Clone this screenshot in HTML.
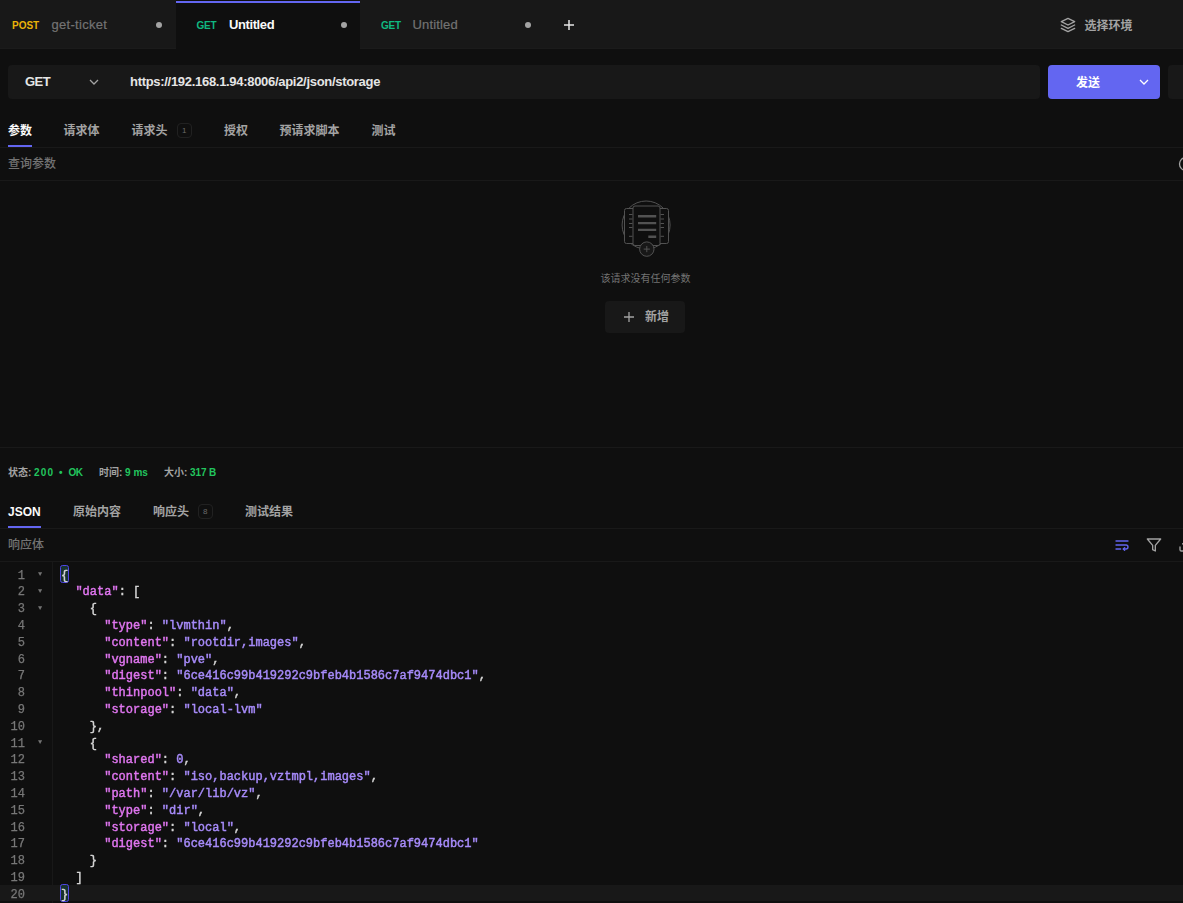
<!DOCTYPE html>
<html lang="zh-CN">
<head>
<meta charset="utf-8">
<title>Hoppscotch</title>
<style>
*{box-sizing:border-box;margin:0;padding:0}
html,body{width:1183px;height:903px;overflow:hidden;background:#0f0f0f}
body{font-family:"Liberation Sans","Noto Sans CJK SC",sans-serif;color:#a3a3a3;font-size:12px;position:relative}
.abs{position:absolute}
.tabbar{position:absolute;left:0;top:0;width:1183px;height:49px;background:#181818;border-bottom:1px solid #1b1b1b}
.tab{position:absolute;top:0;height:49px}
.tab .m{position:absolute;top:20px;font-size:10px;font-weight:bold;line-height:12px;letter-spacing:0}
.tab .t{position:absolute;top:17px;font-size:13px;line-height:16px;white-space:nowrap}
.dot{position:absolute;width:6px;height:6px;border-radius:50%;background:#a3a3a3;top:22px}
.active{background:#0f0f0f}
.active:before{content:"";position:absolute;left:0;right:0;top:1px;height:2px;background:#6366f1}
.hline{position:absolute;left:0;width:1183px;height:1px;background:#191919}
.ttab{position:absolute;font-size:12px;font-weight:bold;line-height:16px;white-space:nowrap;color:#a3a3a3}
.st{position:absolute;top:466px;font-size:10px;font-weight:bold;line-height:14px;white-space:nowrap;color:#a3a3a3}
.g{color:#22c55e}
.ul{position:absolute;height:2px;background:#6366f1}
.badge{position:absolute;border:1px solid #212121;border-radius:4px;font-size:8px;line-height:13px;text-align:center;color:#6a6a6a;width:15px;height:15px}
.code{position:absolute;left:0;top:567px;padding-top:0.600px;will-change:transform;width:1183px;font-family:"Liberation Mono",monospace;font-size:12px;font-weight:normal;-webkit-text-stroke:0.450px;color:#d4d4d4}
.ln{position:relative;z-index:0;height:16.8px;line-height:16.8px;white-space:pre}
.ln .n{position:absolute;left:0;width:25px;text-align:right;color:#777777;font-weight:normal;-webkit-text-stroke:0.250px}
.ln .f{position:absolute;left:38px;top:-1.300px;color:#737373;font-size:7px;font-weight:normal;-webkit-text-stroke:0}
.ln .c{position:absolute;left:61px}
.bm{position:relative}
.bm:before{content:"";position:absolute;left:-1px;right:-1px;top:-3.500px;bottom:-0.400px;border:1px solid #4f46e5;border-radius:2.500px;background:#17322e;z-index:-1}
.k{color:#e076f0}
.s{color:#a78bfa}
.gut{position:absolute;left:52px;top:562px;width:1px;height:341px;background:#181818}
</style>
</head>
<body>
<div class="tabbar">
  <div class="tab" style="left:0;width:176px">
    <span class="m" style="left:12px;color:#eab308">POST</span>
    <span class="t" style="left:51.500px;color:#737373;letter-spacing:0.300px;-webkit-text-stroke:0.200px">get-ticket</span>
    <span class="dot" style="left:156px"></span>
  </div>
  <div class="tab active" style="left:176px;width:184px">
    <span class="m" style="left:20.500px;color:#10b981;letter-spacing:-0.200px">GET</span>
    <span class="t" style="left:53px;color:#fafafa;font-weight:bold;letter-spacing:-0.400px">Untitled</span>
    <span class="dot" style="left:165px"></span>
  </div>
  <div class="tab" style="left:360px;width:184px">
    <span class="m" style="left:21px;color:#10b981;letter-spacing:-0.200px">GET</span>
    <span class="t" style="left:52.500px;color:#737373;letter-spacing:0.150px;-webkit-text-stroke:0.200px">Untitled</span>
    <span class="dot" style="left:165px"></span>
  </div>
  <svg class="abs" style="left:562px;top:18px" width="14" height="14" viewBox="0 0 14 14"><path d="M7 2v10M2 7h10" stroke="#e5e5e5" stroke-width="1.500" fill="none"/></svg>
  <svg class="abs" style="left:1060px;top:16.800px" width="16" height="16" viewBox="0 0 24 24" fill="none" stroke="#a3a3a3" stroke-width="2" stroke-linecap="round" stroke-linejoin="round"><path d="M12 2 2 7l10 5 10-5-10-5z"/><path d="m2 12 10 5 10-5"/><path d="m2 17 10 5 10-5"/></svg>
  <span class="abs" style="left:1084.500px;top:17.500px;font-size:12px;font-weight:bold;line-height:16px;color:#a3a3a3;white-space:nowrap">选择环境</span>
</div>

<!-- URL row -->
<div class="abs" style="left:8px;top:65px;width:1032px;height:34px;background:#181818;border-radius:4px"></div>
<span class="abs" style="left:25px;top:74px;font-size:13px;font-weight:bold;line-height:16px;color:#e5e5e5;letter-spacing:-0.500px">GET</span>
<svg class="abs" style="left:88px;top:76px" width="12" height="12" viewBox="0 0 12 12"><path d="M2 4l4 4 4-4" stroke="#a3a3a3" stroke-width="1.3" fill="none"/></svg>
<span class="abs" style="left:130px;top:74px;font-size:13px;font-weight:bold;line-height:16px;color:#e5e5e5;white-space:nowrap;letter-spacing:-0.300px">https://192.168.1.94:8006/api2/json/storage</span>
<div class="abs" style="left:1048px;top:65px;width:112px;height:34px;background:#6366f1;border-radius:4px"></div>
<span class="abs" style="left:1076px;top:74.500px;font-size:12px;font-weight:bold;line-height:16px;color:#fff;white-space:nowrap">发送</span>
<svg class="abs" style="left:1138px;top:76px" width="12" height="12" viewBox="0 0 12 12"><path d="M2 4l4 4 4-4" stroke="#fff" stroke-width="1.3" fill="none"/></svg>
<div class="abs" style="left:1168px;top:65px;width:20px;height:34px;background:#181818;border-radius:4px"></div>

<!-- request tabs -->
<span class="ttab" style="left:8px;top:123px;color:#fafafa">参数</span>
<span class="ttab" style="left:63.500px;top:123px">请求体</span>
<span class="ttab" style="left:131.500px;top:123px">请求头</span>
<span class="badge" style="left:176.700px;top:123px">1</span>
<span class="ttab" style="left:224px;top:123px">授权</span>
<span class="ttab" style="left:279.500px;top:123px">预请求脚本</span>
<span class="ttab" style="left:371.500px;top:123px">测试</span>
<div class="ul" style="left:8px;top:145px;width:24px"></div>
<div class="hline" style="top:147px"></div>
<span class="abs" style="left:8px;top:156px;font-size:12px;font-weight:500;line-height:16px;color:#737373;white-space:nowrap">查询参数</span>
<svg class="abs" style="left:1177.700px;top:156px" width="16" height="16" viewBox="0 0 16 16"><circle cx="8" cy="8" r="6.5" stroke="#a3a3a3" stroke-width="1.3" fill="none"/></svg>
<div class="hline" style="top:180px"></div>

<!-- empty state -->
<svg class="abs" style="left:618px;top:198px" width="58" height="60" viewBox="0 0 58 60" fill="none" stroke="#525252" stroke-width="1">
  <circle cx="28.100" cy="27" r="24"/>
  <rect x="6.500" y="10.500" width="44" height="35" rx="2" fill="#0f0f0f"/>
  <rect x="15" y="8" width="27" height="39.500" rx="2" fill="#0f0f0f"/>
  <path d="M11 16.500h3.500M11 21h3.500M11 25.500h3.500M11 29.500h3.500M11 38.300h3.500M42.500 16.500h3.500M42.500 21h3.500M42.500 25.500h3.500M42.500 29.500h3.500M42.500 38.300h3.500"/>
  <path d="M20 18.300h18.200M20 25.100h18.200M20 31.900h18.200M30.300 38.700h7.900" stroke-width="2.400"/>
  <circle cx="28.800" cy="51.100" r="7.200" fill="#181818"/>
  <path d="M28.800 48v6.200M25.700 51.100h6.200"/>
</svg>
<span class="abs" style="left:545.500px;top:271.500px;width:200px;text-align:center;font-size:10px;line-height:14px;color:#737373;white-space:nowrap">该请求没有任何参数</span>
<div class="abs" style="left:605px;top:301px;width:80px;height:32px;background:#181818;border-radius:4px"></div>
<svg class="abs" style="left:622px;top:310px" width="14" height="14" viewBox="0 0 14 14"><path d="M7 2v10M2 7h10" stroke="#a3a3a3" stroke-width="1.300" fill="none"/></svg>
<span class="abs" style="left:645px;top:309px;font-size:12px;font-weight:bold;line-height:16px;color:#a3a3a3;white-space:nowrap">新增</span>

<div class="hline" style="top:447px"></div>

<!-- status -->
<div class="st" style="left:8px">状态:</div>
<div class="st g" style="left:34px;letter-spacing:1.200px">200</div>
<div class="st g" style="left:59px">•</div>
<div class="st g" style="left:68.400px;letter-spacing:-0.300px">OK</div>
<div class="st" style="left:99px">时间: <span class="g">9 ms</span></div>
<div class="st" style="left:164px">大小: <span class="g" style="letter-spacing:-0.150px">317 B</span></div>

<!-- response tabs -->
<span class="ttab" style="left:8px;top:504px;color:#fafafa">JSON</span>
<span class="ttab" style="left:73px;top:504px">原始内容</span>
<span class="ttab" style="left:153px;top:504px">响应头</span>
<span class="badge" style="left:197.700px;top:504px">8</span>
<span class="ttab" style="left:245px;top:504px">测试结果</span>
<div class="ul" style="left:8px;top:526px;width:33px"></div>
<div class="hline" style="top:528px"></div>
<span class="abs" style="left:8px;top:537px;font-size:12px;font-weight:500;line-height:16px;color:#737373;white-space:nowrap">响应体</span>
<svg class="abs" style="left:1114px;top:537px" width="16" height="16" viewBox="0 0 24 24" fill="none" stroke="#6366f1" stroke-width="2" stroke-linecap="round" stroke-linejoin="round"><path d="M3 6h18"/><path d="M3 12h15a3 3 0 1 1 0 6h-4"/><path d="m16 16-2 2 2 2"/><path d="M3 18h7"/></svg>
<svg class="abs" style="left:1146px;top:537px" width="16" height="16" viewBox="0 0 24 24" fill="none" stroke="#a3a3a3" stroke-width="2" stroke-linecap="round" stroke-linejoin="round"><path d="M22 3H2l8 9.460V19l4 2v-8.540L22 3z"/></svg>
<svg class="abs" style="left:1178px;top:537px" width="16" height="16" viewBox="0 0 24 24" fill="none" stroke="#a3a3a3" stroke-width="2" stroke-linecap="round" stroke-linejoin="round"><path d="M21 15v4a2 2 0 0 1-2 2H5a2 2 0 0 1-2-2v-4"/><path d="m7 10 5 5 5-5"/><path d="M12 15V3"/></svg>
<div class="hline" style="top:561px"></div>

<!-- code -->
<div class="gut"></div>
<div class="abs" style="left:0;top:884.800px;width:1183px;height:16px;background:#181818"></div>
<div class="code">
<div class="ln"><span class="n">1</span><span class="f">▼</span><span class="c"><span class="bm">{</span></span></div>
<div class="ln"><span class="n">2</span><span class="f">▼</span><span class="c">  <span class="k">"data"</span>: [</span></div>
<div class="ln"><span class="n">3</span><span class="f">▼</span><span class="c">    {</span></div>
<div class="ln"><span class="n">4</span><span class="c">      <span class="k">"type"</span>: <span class="s">"lvmthin"</span>,</span></div>
<div class="ln"><span class="n">5</span><span class="c">      <span class="k">"content"</span>: <span class="s">"rootdir,images"</span>,</span></div>
<div class="ln"><span class="n">6</span><span class="c">      <span class="k">"vgname"</span>: <span class="s">"pve"</span>,</span></div>
<div class="ln"><span class="n">7</span><span class="c">      <span class="k">"digest"</span>: <span class="s">"6ce416c99b419292c9bfeb4b1586c7af9474dbc1"</span>,</span></div>
<div class="ln"><span class="n">8</span><span class="c">      <span class="k">"thinpool"</span>: <span class="s">"data"</span>,</span></div>
<div class="ln"><span class="n">9</span><span class="c">      <span class="k">"storage"</span>: <span class="s">"local-lvm"</span></span></div>
<div class="ln"><span class="n">10</span><span class="c">    },</span></div>
<div class="ln"><span class="n">11</span><span class="f">▼</span><span class="c">    {</span></div>
<div class="ln"><span class="n">12</span><span class="c">      <span class="k">"shared"</span>: <span class="s">0</span>,</span></div>
<div class="ln"><span class="n">13</span><span class="c">      <span class="k">"content"</span>: <span class="s">"iso,backup,vztmpl,images"</span>,</span></div>
<div class="ln"><span class="n">14</span><span class="c">      <span class="k">"path"</span>: <span class="s">"/var/lib/vz"</span>,</span></div>
<div class="ln"><span class="n">15</span><span class="c">      <span class="k">"type"</span>: <span class="s">"dir"</span>,</span></div>
<div class="ln"><span class="n">16</span><span class="c">      <span class="k">"storage"</span>: <span class="s">"local"</span>,</span></div>
<div class="ln"><span class="n">17</span><span class="c">      <span class="k">"digest"</span>: <span class="s">"6ce416c99b419292c9bfeb4b1586c7af9474dbc1"</span></span></div>
<div class="ln"><span class="n">18</span><span class="c">    }</span></div>
<div class="ln"><span class="n">19</span><span class="c">  ]</span></div>
<div class="ln"><span class="n">20</span><span class="c"><span class="bm">}</span></span></div>
</div>
</body>
</html>
